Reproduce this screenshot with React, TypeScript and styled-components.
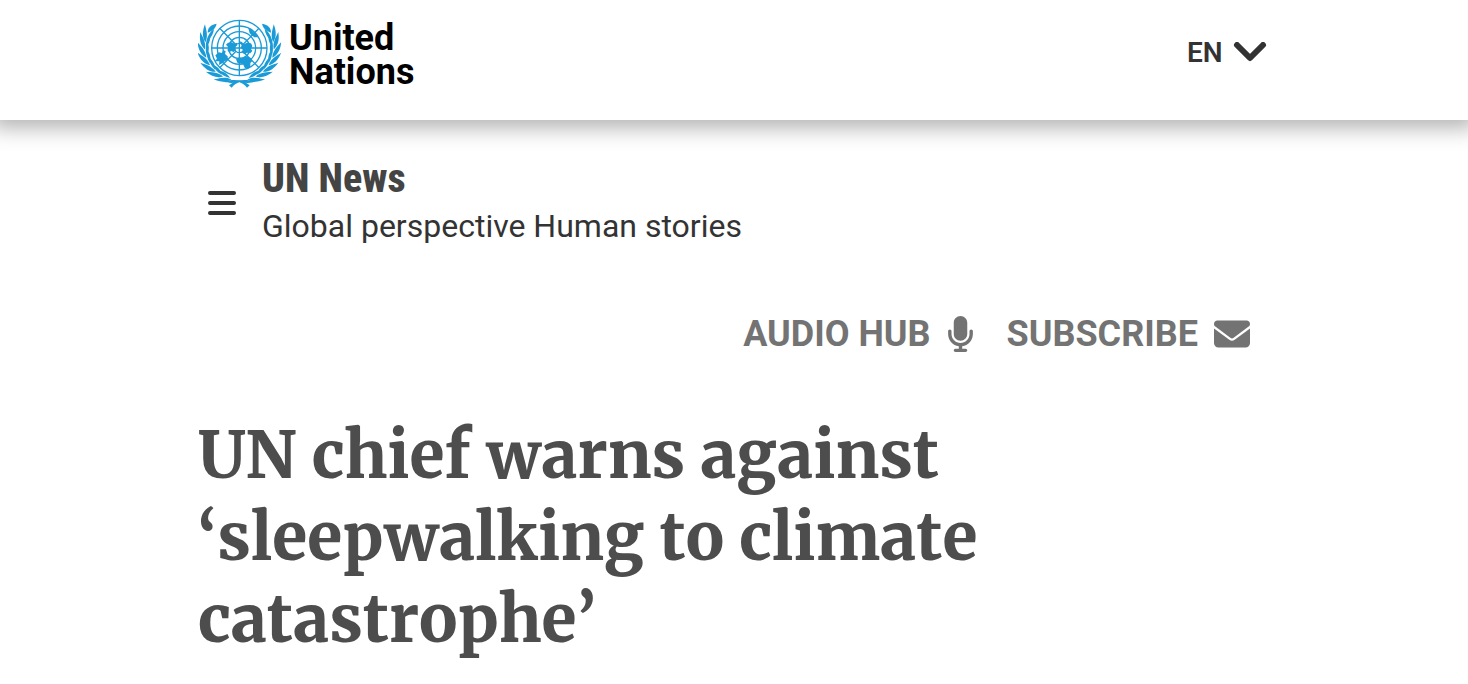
import React from "react";
import styled, { createGlobalStyle } from "styled-components";
import { FaMicrophone, FaEnvelope } from "react-icons/fa6";

const sans = `Roboto, "Liberation Sans", sans-serif`;
const emblemBlue = "#1a9bd7";

const GlobalStyle = createGlobalStyle`
  *, *::before, *::after { box-sizing: border-box; }
  body {
    margin: 0;
    background: #fff;
    color: #333;
    font-family: ${sans};
  }
`;

const Container = styled.div`
  width: 100%;
  max-width: 1120px;
  margin: 0 auto;
  padding: 0 24px;
`;

const Header = styled.header`
  background: #fff;
  box-shadow: 0 0 20px 8px rgba(0, 0, 0, 0.3);
`;

const HeaderRow = styled(Container)`
  display: flex;
  align-items: flex-start;
  justify-content: space-between;
  padding-top: 18px;
  min-height: 120px;
`;

const Brand = styled.a`
  display: flex;
  align-items: flex-start;
  gap: 8px;
  color: #000;
  text-decoration: none;
`;

const BrandName = styled.span`
  display: block;
  width: min-content;
  padding-top: 3px;
  font-size: 36px;
  font-weight: 700;
  line-height: 34px;
`;

const LanguageLabel = styled.label`
  display: flex;
  align-items: center;
  gap: 10px;
  padding: 18px 3px 0 0;
`;

const LanguageSelect = styled.select`
  appearance: none;
  margin: 0;
  padding: 0;
  border: 0;
  background: none;
  color: #333;
  font-family: inherit;
  font-size: 28px;
  font-weight: 600;
  line-height: 34px;
`;

const SiteBar = styled(Container)`
  display: flex;
  align-items: center;
  gap: 22px;
  padding-top: 36px;
`;

const MenuButton = styled.button`
  display: flex;
  margin: 0 0 0 6px;
  padding: 4px;
  border: 0;
  background: none;
  color: #333;
`;

const SiteName = styled.a`
  display: block;
  color: #444;
  font-family: "Roboto Condensed", "Liberation Sans Narrow", ${sans};
  font-size: 40px;
  font-weight: 800;
  line-height: 46px;
  text-decoration: none;
`;

const Tagline = styled.p`
  margin: 0;
  font-size: 32px;
  line-height: 48px;
`;

const Actions = styled(Container)`
  display: flex;
  justify-content: flex-end;
  gap: 33px;
  padding-top: 60px;
  padding-right: 44px;
`;

const ActionLink = styled.a`
  display: flex;
  align-items: center;
  gap: 16px;
  color: #737373;
  font-size: 36px;
  font-weight: 700;
  line-height: 48px;
  text-decoration: none;
  text-transform: uppercase;
`;

const MicrophoneIcon = styled(FaMicrophone)`
  width: 27px;
  height: 36px;
`;

const Headline = styled.h1`
  margin: 56px 0 0;
  max-width: 880px;
  color: #4d4d4d;
  font-family: Merriweather, "DejaVu Serif Condensed", "DejaVu Serif", serif;
  font-kerning: none;
  font-size: 64px;
  font-weight: 800;
  line-height: 82px;
`;

const CENTER = { x: 147, y: 114 };

/* Laurel leaves: angle in degrees from the bottom of the globe. */
const leaves = [22, 37, 52, 67, 82, 97, 110];

function Branch() {
  return (
    <g fill={emblemBlue}>
      <path d="M178 226C160 211 140 209 118 211C104 211 92 207 84 202C100 222 124 221 146 216C156 219 164 225 170 233Z" />
      {leaves.map((deg) => {
        const a = (deg * Math.PI) / 180;
        const x = CENTER.x - 104 * Math.sin(a);
        const y = CENTER.y + 97 * Math.cos(a);
        return (
          <g key={deg} transform={`translate(${x} ${y}) rotate(${deg - 90})`}>
            <path d="M2 16C-13 6 -19 -12 -18 -34C-10 -20 3 -8 2 16Z" />
            <path d="M4 10C1 -6 4 -20 12 -30C16 -14 12 0 4 10Z" />
          </g>
        );
      })}
      <path d="M52 68C52 54 60 44 79 41C76 54 68 62 52 68Z" />
    </g>
  );
}

function Emblem() {
  return (
    <svg width="83" height="70" viewBox="23 24 249 210" aria-hidden="true">
      <g fill="none" stroke={emblemBlue} strokeWidth="4">
        {[83, 66, 49, 32, 14].map((r) => (
          <circle key={r} cx={CENTER.x} cy={CENTER.y} r={r} />
        ))}
        <path d="M147 31V197M64 114H230M88 55L137 104M157 124L206 173M206 55L157 104M137 124L88 173" />
      </g>
      <g fill={emblemBlue}>
        <path d="M107 104L113 98L124 97L133 101L140 98L141 106L134 112L136 120L130 126L122 123L117 128L111 120L115 113Z" />
        <path d="M75 136L86 127L94 129L99 120L106 124L104 132L112 139L113 150L104 153L96 160L86 165L87 154L73 154L80 146Z" />
        <path d="M146 93L155 96L160 103L170 98L182 100L186 108L182 117L186 123L180 130L170 128L163 133L153 127L158 120L151 113L154 106Z" />
        <path d="M137 148L146 142L158 144L166 139L182 144L186 153L180 159L180 170L172 178L163 173L158 162L142 160Z" />
        <path d="M174 55L184 57L188 65L197 71L203 82L192 82L184 76L178 70Z" />
      </g>
      <Branch />
      <g transform="translate(294 0) scale(-1 1)">
        <Branch />
      </g>
    </svg>
  );
}

function ChevronDown() {
  return (
    <svg width="34" height="22" viewBox="0 0 34 22" aria-hidden="true">
      <path
        d="M4 3L17 16L30 3"
        fill="none"
        stroke="#333"
        strokeWidth="6"
        strokeLinecap="round"
        strokeLinejoin="round"
      />
    </svg>
  );
}

function Bars() {
  return (
    <svg width="28" height="24" viewBox="0 0 28 24" aria-hidden="true">
      <path
        d="M2 2H26M2 12H26M2 22H26"
        stroke="currentColor"
        strokeWidth="4"
        strokeLinecap="round"
      />
    </svg>
  );
}

export default function App() {
  return (
    <>
      <GlobalStyle />
      <Header>
        <HeaderRow>
          <Brand href="#">
            <Emblem />
            <BrandName>United Nations</BrandName>
          </Brand>
          <LanguageLabel>
            <LanguageSelect aria-label="Language" defaultValue="en">
              <option value="en">EN</option>
            </LanguageSelect>
            <ChevronDown />
          </LanguageLabel>
        </HeaderRow>
      </Header>
      <SiteBar as="nav">
        <MenuButton type="button" aria-label="Menu">
          <Bars />
        </MenuButton>
        <div>
          <SiteName href="#">UN News</SiteName>
          <Tagline>Global perspective Human stories</Tagline>
        </div>
      </SiteBar>
      <Actions>
        <ActionLink href="#">
          Audio Hub
          <MicrophoneIcon aria-hidden="true" />
        </ActionLink>
        <ActionLink href="#">
          Subscribe
          <FaEnvelope aria-hidden="true" />
        </ActionLink>
      </Actions>
      <Container as="main">
        <Headline>UN chief warns against ‘sleepwalking to climate catastrophe’</Headline>
      </Container>
    </>
  );
}
